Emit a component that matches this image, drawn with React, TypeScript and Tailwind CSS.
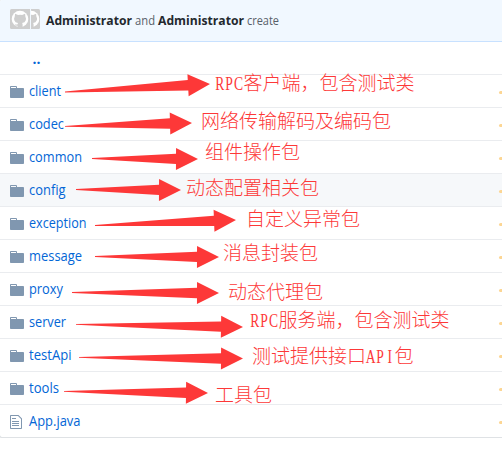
type Note = { text: string; x: number; y: number; from: [number, number]; to: [number, number] };
type Entry = { name: string; width: string; file?: boolean; active?: boolean };

const entries: Entry[] = [
  { name: 'client', width: '32' },
  { name: 'codec', width: '35' },
  { name: 'common', width: '53' },
  { name: 'config', width: '36.5' },
  { name: 'exception', width: '57.5' },
  { name: 'message', width: '53' },
  { name: 'proxy', width: '34' },
  { name: 'server', width: '37' },
  { name: 'testApi', width: '42.5' },
  { name: 'tools', width: '30' },
  { name: 'App.java', width: '51.5', file: true },
].map((e) => ({ ...e, active: e.name === 'config' }));

const notes: Note[] = [
  { text: 'RPC客户端，包含测试类', x: 215, y: 89.5, from: [65, 92], to: [210, 84] },
  { text: '网络传输解码及编码包', x: 201, y: 128, from: [65, 126.3], to: [192, 123] },
  { text: '组件操作包', x: 205, y: 159, from: [92, 158.5], to: [198, 159] },
  { text: '动态配置相关包', x: 186, y: 194.5, from: [76, 189.5], to: [181, 190] },
  { text: '自定义异常包', x: 246, y: 226, from: [95, 225.5], to: [236, 220] },
  { text: '消息封装包', x: 223, y: 259.5, from: [95, 256.5], to: [219, 257] },
  { text: '动态代理包', x: 228, y: 299, from: [72, 292.5], to: [219, 293] },
  { text: 'RPC服务端，包含测试类', x: 250, y: 326.5, from: [76, 324.3], to: [243, 327] },
  { text: '测试提供接口API包', x: 252, y: 362.5, from: [79, 357.3], to: [243, 358.6] },
  { text: '工具包', x: 215, y: 401.5, from: [64, 391.3], to: [208, 393] },
];

const LATIN_SCALE = 0.7;
const inset: Record<string, number> = { R: 0.2, P: 0.8, C: 0.1, A: -0.2, I: 2.4 };

function arrowPoints([x1, y1]: [number, number], [x2, y2]: [number, number]) {
  const len = Math.hypot(x2 - x1, y2 - y1);
  const ux = (x2 - x1) / len;
  const uy = (y2 - y1) / len;
  const at = (back: number, side: number) =>
    `${x2 - ux * back - uy * side},${y2 - uy * back + ux * side}`;
  return [at(len, -0.4), at(22, -5.2), at(22, -11), at(0, 0), at(22, 11), at(22, 5.2), at(len, 0.4)].join(' ');
}

function Annotation({ note }: { note: Note }) {
  let x = note.x;
  return (
    <g fill="#fd3838">
      <polygon points={arrowPoints(note.from, note.to)} />
      {(note.text.match(/[A-Z]+|[^A-Z]+/g) ?? []).map((run) => {
        const left = x;
        const latin = /[A-Z]/.test(run);
        x += run.length * (latin ? 9.5 : 19);
        return latin ? (
          <text
            key={run}
            transform={`translate(${left} ${note.y}) scale(${LATIN_SCALE} 1)`}
            x={[...run].map((c, i) => (i * 9.5 + inset[c]) / LATIN_SCALE).join(' ')}
            className="font-['Liberation_Serif',serif] text-[19.5px]"
          >
            {run}
          </text>
        ) : (
          <text key={run} x={left} y={note.y} className="font-['Noto_Sans_CJK_SC',sans-serif] text-[19px] font-light">{run}</text>
        );
      })}
    </g>
  );
}

function Label({ text, width, bold, className }: { text: string; width: string; bold?: boolean; className: string }) {
  return (
    <svg height="20" style={{ width: Number(width) }} className={`shrink-0 overflow-visible ${className}`}>
      <text x="0" y="15" fill="currentColor" textLength={width} lengthAdjust="spacingAndGlyphs" className={bold ? 'font-bold' : ''}>{text}</text>
    </svg>
  );
}

function Cat({ x }: { x: number }) {
  return (
    <g transform={`translate(${x} 0)`}>
      <circle cx="10" cy="10" r="8.3" fill="#fff" />
      <path d="M5.1 4.8l3 1.2q2-.5 4 0l3-1.2.3 3q1 1.5.4 3.5-.8 2.5-3.7 2.8.5.8.5 1.6v3H7.6v-2q-2.2.3-3-1.8 1.5 1 3 .4l.4-1.2q-3-.3-3.7-2.8-.6-2 .4-3.5z" fill="#cecece" />
    </g>
  );
}

export default function App() {
  return (
    <div className="relative h-[467px] w-[502px] overflow-hidden bg-white font-['Open_Sans','Noto_Sans',sans-serif]">
      <div className="-ml-px w-[510px] overflow-hidden rounded-[3px] border-b border-l border-b-[#dfe2e5] border-l-[#dfe2e5]">
        <header className="flex h-[42px] items-center border-b border-[#c8e1ff] bg-[#f1f8ff] pl-[10px] pb-[3px]">
          <svg width="30" height="20" className="mr-[6px] shrink-0">
            <rect width="30" height="20" rx="1.5" fill="#cecece" />
            <Cat x={0} />
            <path d="M20.5 0v20" stroke="#f1f8ff" />
            <svg x="21" width="9" height="20"><Cat x={-10} /></svg>
          </svg>
          <div className="flex gap-[3px] pt-px text-[13px]">
            <Label text="Administrator" width="86" bold className="text-[#24292e]" />
            <Label text="and" width="20" className="text-[#586069]" />
            <Label text="Administrator" width="86" bold className="text-[#24292e]" />
            <Label text="create" width="32" className="text-[#586069]" />
          </div>
        </header>
        <div className="h-[32px] pl-[32.5px] pt-[7px] text-[14px] font-bold leading-[20px] text-[#0366d6]">..</div>
        {entries.map((e) => (
          <div key={e.name} className={`flex h-[33px] items-start border-t border-[#eaecef] pl-[10px] ${e.active ? 'bg-[#f6f8fa]' : ''}`}>
            <svg width="14" height="16" viewBox="0 0 14 16" fill="#8097b0" className="mt-[9px] mr-[5px] shrink-0">
              {e.file ? (
                <path d="M6 5H2V4h4v1zM2 8h7V7H2v1zm0 2h7V9H2v1zm0 2h7v-1H2v1zm10-7.5V14c0 .55-.45 1-1 1H1c-.55 0-1-.45-1-1V2c0-.55.45-1 1-1h7.5L12 4.5zM11 5L8 2H1v12h10V5z" />
              ) : (
                <path d="M13 4H7V3c0-.66-.31-1-1-1H1c-.55 0-1 .45-1 1v10c0 .55.45 1 1 1h12c.55 0 1-.45 1-1V5c0-.55-.45-1-1-1zM6 4H1V3h5v1z" />
              )}
            </svg>
            <div className="mt-[6px] text-[14px]">
              <Label text={e.name} width={e.width} className="text-[#0366d6]" />
            </div>
            <span className="mt-[16px] ml-auto mr-[6px] h-[3px] w-[4px] rounded-l-sm bg-[#fcd694]" />
          </div>
        ))}
      </div>
      <svg width="502" height="467" className="absolute inset-0">
        {notes.map((n) => <Annotation key={n.text} note={n} />)}
      </svg>
    </div>
  );
}
